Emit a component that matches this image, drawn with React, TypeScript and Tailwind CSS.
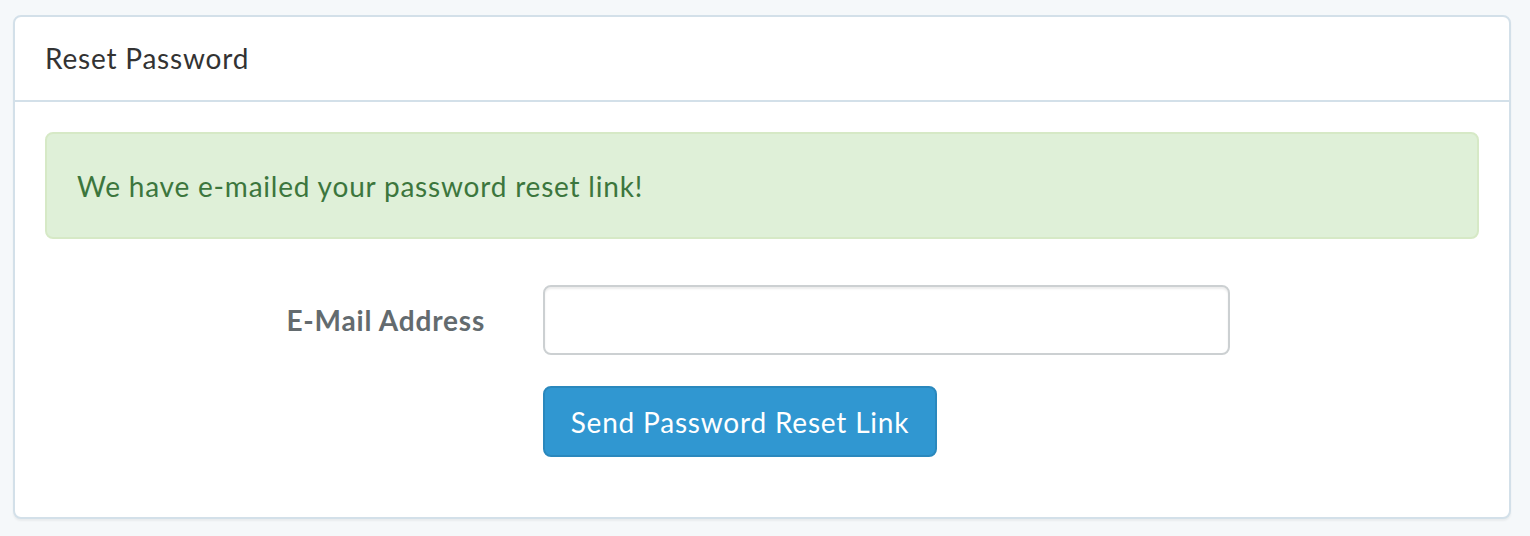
import React from 'react';

const font = { fontFamily: 'Lato, "Open Sans", sans-serif' };

const App = () => {
  return (
    <div className="min-h-[536px] bg-[#f5f8fa] pt-[15px] pl-[13px] pr-[19px] tracking-[0.8px]" style={font}>
      <article className="rounded-[8px] border-2 border-[#d3e0e9] bg-white shadow-[0_2px_2px_rgba(0,0,0,0.05)]">
        <div className="flex h-[85px] items-center border-b-2 border-[#d3e0e9] px-[30px] pb-[2px] text-[28px] text-[#333]">
          Reset Password
        </div>
        <div className="px-[30px] pt-[30px] pb-[60px]">
          <div className="flex h-[107px] items-center rounded-[8px] border-2 border-[#d6e9c6] bg-[#dff0d8] px-[30px] text-[28px] text-[#3c763d]">
            We have e-mailed your password reset link!
          </div>
          <form className="mt-[46px] flex flex-col gap-[31px]">
            <div className="flex items-center">
              <label className="w-[468px] pr-[28px] text-right text-[28px] font-bold text-[#636b6f]">
                E-Mail Address
              </label>
              <input
                type="email"
                className="ml-[30px] h-[70px] w-[687px] rounded-[8px] border-2 border-[#ccd0d2] bg-white px-[24px] text-[28px] shadow-[inset_0_2px_2px_rgba(0,0,0,0.075)] outline-none"
              />
            </div>
            <div className="pl-[498px]">
              <button
                type="button"
                className="h-[71px] w-[394px] rounded-[8px] border-2 border-[#2a88bd] bg-[#3097d1] text-[28px] text-white"
              >
                Send Password Reset Link
              </button>
            </div>
          </form>
        </div>
      </article>
    </div>
  );
};

export default App;
